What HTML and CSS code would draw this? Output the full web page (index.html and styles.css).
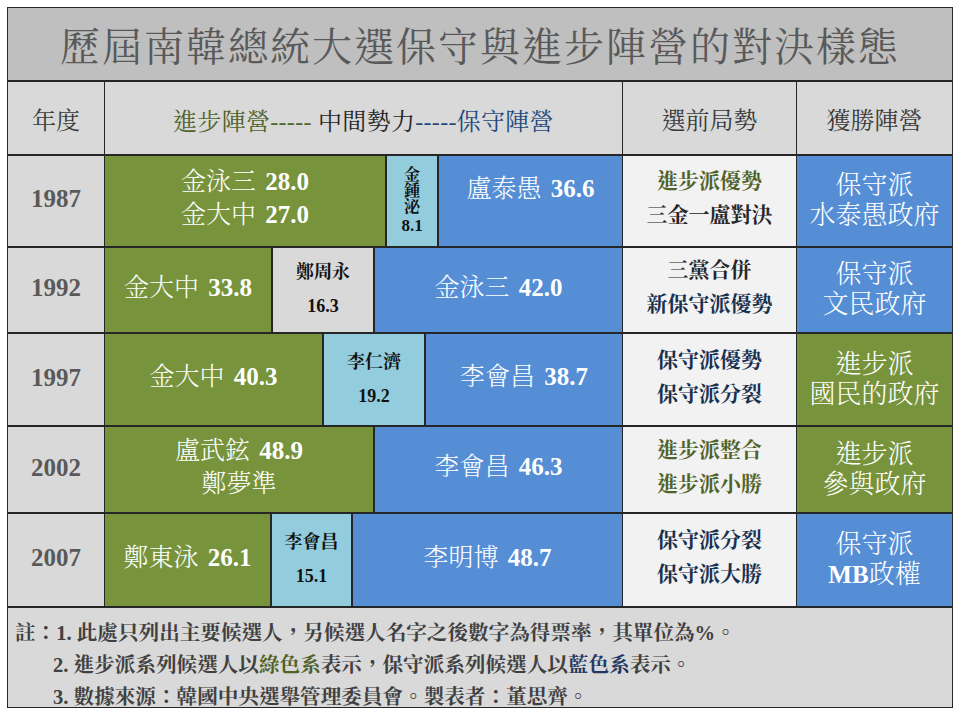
FILE: index.html
```html
<!DOCTYPE html>
<html lang="zh-Hant">
<head>
<meta charset="utf-8">
<title>歷屆南韓總統大選保守與進步陣營的對決樣態</title>
<link rel="stylesheet" href="styles.css">
</head>
<body>
<div class="board">
  <div class="title">歷屆南韓總統大選保守與進步陣營的對決樣態</div>

  <div class="hd">年度</div>
  <div class="hd hd-mid"><span class="tg">進步陣營-----</span>&nbsp;中間勢力<span class="tb">-----保守陣營</span></div>
  <div class="hd">選前局勢</div>
  <div class="hd">獲勝陣營</div>

  <div class="year">1987</div>
  <div class="bars">
    <div class="seg green" style="width:280px"><div>金泳三<b>28.0</b></div><div>金大中<b>27.0</b></div></div>
    <div class="seg light tiny" style="width:50px"><div class="stack">金<br>鍾<br>泌</div><div class="tnum">8.1</div></div>
    <div class="seg blue up"><div>盧泰愚<b>36.6</b></div></div>
  </div>
  <div class="sit"><div class="tg">進步派優勢</div><div class="tk">三金一盧對決</div></div>
  <div class="win blue"><div>保守派</div><div>水泰愚政府</div></div>

  <div class="year">1992</div>
  <div class="bars">
    <div class="seg green" style="width:166px"><div>金大中<b>33.8</b></div></div>
    <div class="seg gray small" style="width:100px"><div>鄭周永</div><div>16.3</div></div>
    <div class="seg blue"><div>金泳三<b>42.0</b></div></div>
  </div>
  <div class="sit"><div class="tk">三黨合併</div><div class="tn">新保守派優勢</div></div>
  <div class="win blue"><div>保守派</div><div>文民政府</div></div>

  <div class="year">1997</div>
  <div class="bars">
    <div class="seg green" style="width:217px"><div>金大中<b>40.3</b></div></div>
    <div class="seg light small" style="width:100px"><div>李仁濟</div><div>19.2</div></div>
    <div class="seg blue"><div>李會昌<b>38.7</b></div></div>
  </div>
  <div class="sit"><div class="tn">保守派優勢</div><div class="tn">保守派分裂</div></div>
  <div class="win green"><div>進步派</div><div>國民的政府</div></div>

  <div class="year">2002</div>
  <div class="bars">
    <div class="seg green" style="width:268px"><div>盧武鉉<b>48.9</b></div><div>鄭夢準</div></div>
    <div class="seg blue"><div>李會昌<b>46.3</b></div></div>
  </div>
  <div class="sit"><div class="tg">進步派整合</div><div class="tg">進步派小勝</div></div>
  <div class="win green"><div>進步派</div><div>參與政府</div></div>

  <div class="year">2007</div>
  <div class="bars">
    <div class="seg green" style="width:165px"><div>鄭東泳<b>26.1</b></div></div>
    <div class="seg light small" style="width:79px"><div>李會昌</div><div>15.1</div></div>
    <div class="seg blue"><div>李明博<b>48.7</b></div></div>
  </div>
  <div class="sit"><div class="tn">保守派分裂</div><div class="tn">保守派大勝</div></div>
  <div class="win blue"><div>保守派</div><div><b class="mb">MB</b>政權</div></div>

  <div class="notes">
    <div>註：1. 此處只列出主要候選人，另候選人名字之後數字為得票率，其單位為%。</div>
    <div class="ind">2. 進步派系列候選人以<span class="ng">綠色系</span>表示，保守派系列候選人以<span class="nb">藍色系</span>表示。</div>
    <div class="ind">3. 數據來源：韓國中央選舉管理委員會。製表者：董思齊。</div>
  </div>
</div>
</body>
</html>
```

FILE: styles.css
```css
html, body {
  margin: 0;
  padding: 0;
  background: #ffffff;
}

body {
  padding: 7px 0 0 7px;
  font-family: "Liberation Serif", "Noto Serif CJK TC", "Noto Sans CJK TC", serif;
}

.board {
  box-sizing: border-box;
  width: 946px;
  height: 701px;
  padding: 1px;
  background: #262626;
  display: grid;
  grid-template-columns: 96px 517px 173px 155px;
  grid-template-rows: 72px 72px 90px 84px 91px 85px 92px 99px;
  column-gap: 1px;
  row-gap: 2px;
}

.title {
  grid-column: 1 / -1;
  background: #bfbfbf;
  color: #595959;
  font-size: 40px;
  letter-spacing: 2px;
  display: flex;
  align-items: center;
  justify-content: center;
  padding-bottom: 2px;
}

.hd {
  background: #d9d9d9;
  color: #3a3a3a;
  font-size: 24px;
  display: flex;
  align-items: center;
  justify-content: center;
}

.hd-mid {
  font-size: 24px;
  color: #262626;
  padding-top: 2px;
  letter-spacing: 0.3px;
}

.tg { color: #4f6228; }
.tb { color: #1f497d; }
.tk { color: #262626; }
.tn { color: #17304f; }

.year {
  background: #d9d9d9;
  color: #595959;
  font-weight: 700;
  font-size: 25px;
  display: flex;
  align-items: center;
  justify-content: center;
  padding-bottom: 4px;
}

.bars {
  display: flex;
  gap: 2px;
  background: #262626;
}

.seg {
  box-sizing: border-box;
  flex: none;
  display: flex;
  flex-direction: column;
  align-items: center;
  justify-content: center;
  color: #ffffff;
  font-size: 25px;
  font-weight: 300;
  line-height: 33px;
  padding-bottom: 6px;
}

.seg b, .win b {
  font-weight: 700;
  font-size: 25px;
  margin-left: 9px;
}

.win b.mb {
  margin-left: 0;
}

.seg.blue {
  flex: 1;
}

.seg.up {
  justify-content: flex-start;
  padding-top: 16px;
}

.green { background: #77933c; }
.blue { background: #558ed5; }
.light { background: #93cddd; }
.gray { background: #d9d9d9; }

.small {
  color: #111111;
  font-size: 18px;
  font-weight: 700;
  line-height: 34px;
  padding-bottom: 2px;
}

.tiny {
  color: #111111;
  font-weight: 700;
  font-size: 16px;
  padding-bottom: 0;
}

.stack {
  line-height: 16px;
  text-align: center;
  padding-top: 2px;
}

.tnum {
  font-size: 17px;
  line-height: 22px;
}

.sit {
  background: #f2f2f2;
  display: flex;
  flex-direction: column;
  align-items: center;
  justify-content: center;
  font-size: 21px;
  font-weight: 700;
  line-height: 34px;
  padding-bottom: 6px;
}

.win {
  display: flex;
  flex-direction: column;
  align-items: center;
  justify-content: center;
  color: #ffffff;
  font-size: 26px;
  font-weight: 300;
  line-height: 30px;
}

.notes {
  grid-column: 1 / -1;
  background: #d9d9d9;
  color: #404040;
  font-size: 20.6px;
  font-weight: 700;
  line-height: 32px;
  padding: 9px 0 0 7px;
  overflow: hidden;
}

.ind {
  padding-left: 38px;
}

.ng { color: #4f6228; }
.nb { color: #1f3864; }
```
